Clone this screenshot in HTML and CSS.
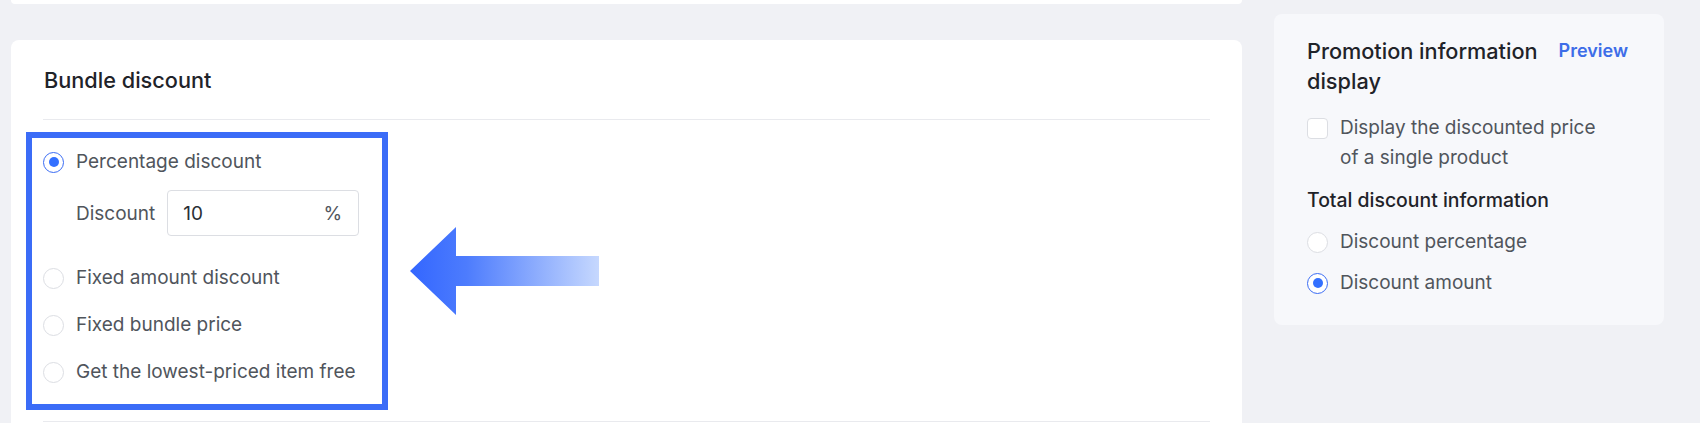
FILE: index.html
```html
<!DOCTYPE html>
<html>
<head>
<meta charset="utf-8">
<link rel="stylesheet" href="styles.css">
</head>
<body>
<div class="page">
  <div class="main">
    <div class="top-card"></div>
    <section class="card">
      <h2 class="card-title">Bundle discount</h2>
      <div class="card-body">
        <div class="highlight">
          <div class="radio-row"><span class="radio checked"></span><span class="radio-text">Percentage discount</span></div>
          <div class="field-row">
            <span class="field-label">Discount</span>
            <div class="input"><span class="input-value">10</span><span class="input-suffix">%</span></div>
          </div>
          <div class="radio-row gap-lg"><span class="radio"></span><span class="radio-text">Fixed amount discount</span></div>
          <div class="radio-row gap-sm"><span class="radio"></span><span class="radio-text">Fixed bundle price</span></div>
          <div class="radio-row gap-sm"><span class="radio"></span><span class="radio-text">Get the lowest-priced item free</span></div>
        </div>
        <svg class="arrow" width="189" height="88" viewBox="0 0 189 88">
          <defs>
            <linearGradient id="ag" x1="0" y1="0" x2="1" y2="0">
              <stop offset="0" stop-color="#3366ff"/>
              <stop offset="0.3" stop-color="#4d7cfd"/>
              <stop offset="1" stop-color="#c6d8fe"/>
            </linearGradient>
          </defs>
          <polygon points="0,44 46,0 46,29 189,29 189,59 46,59 46,88" fill="url(#ag)"/>
        </svg>
      </div>
      <div class="card-foot"></div>
    </section>
  </div>
  <aside class="side">
    <div class="panel">
      <div class="panel-head">
        <h3 class="panel-title">Promotion information display</h3>
        <span class="preview">Preview</span>
      </div>
      <label class="check-row">
        <span class="checkbox"></span>
        <span class="check-text">Display the discounted price of a single product</span>
      </label>
      <div class="sub-title">Total discount information</div>
      <div class="opt-row"><span class="radio"></span><span class="radio-text">Discount percentage</span></div>
      <div class="opt-row opt-second"><span class="radio checked"></span><span class="radio-text">Discount amount</span></div>
    </div>
  </aside>
</div>
</body>
</html>
```
FILE: styles.css
```css
html, body {
  margin: 0;
  padding: 0;
}
body {
  background: #f0f1f5;
  font-family: "Inter", "Liberation Sans", sans-serif;
  color: #50555c;
  width: 1700px;
  height: 423px;
  overflow: hidden;
}
.page {
  display: flex;
  align-items: flex-start;
  padding-left: 11px;
  gap: 32px;
}
.main {
  width: 1231px;
  flex: none;
}
.top-card {
  height: 4px;
  background: #fff;
  border-radius: 0 0 6px 6px;
  margin-bottom: 36px;
}
.card {
  background: #fff;
  border-radius: 8px 8px 0 0;
  padding: 0 32px;
  height: 400px;
}
.card-title {
  margin: 0;
  font-size: 21.7px;
  font-weight: 500;
  line-height: 30px;
  color: #1f2329;
  padding: 25px 0 24px 1px;
  border-bottom: 1px solid #e9eaee;
}
.card-body {
  display: flex;
  align-items: center;
  padding-top: 12px;
}
.highlight {
  box-sizing: border-box;
  width: 362px;
  margin-left: -17px;
  border: 6px solid #3b6cf7;
  padding: 8px 0 16px 11px;
}
.radio-row {
  display: flex;
  align-items: center;
  height: 32px;
  gap: 12px;
}
.gap-lg { margin-top: 26px; }
.gap-sm { margin-top: 15px; }
.radio {
  box-sizing: border-box;
  width: 21px;
  height: 21px;
  border-radius: 50%;
  border: 1px solid #dcdee3;
  background: #fff;
  flex: none;
  display: flex;
  align-items: center;
  justify-content: center;
}
.radio.checked {
  border: 1.5px solid #3a6cf4;
}
.radio.checked::after {
  content: "";
  width: 10px;
  height: 10px;
  border-radius: 50%;
  background: #3370ff;
}
.radio-text {
  font-size: 19px;
  line-height: 28px;
  color: #50555c;
}
.field-row {
  display: flex;
  align-items: center;
  margin-top: 12px;
  padding-left: 33px;
  gap: 12px;
}
.field-label {
  font-size: 19px;
  color: #50555c;
}
.input {
  box-sizing: border-box;
  width: 192px;
  height: 46px;
  border: 1px solid #dcdee3;
  border-radius: 4px;
  display: flex;
  align-items: center;
  justify-content: space-between;
  padding: 0 16px 0 15px;
  font-size: 19px;
  color: #2b2f36;
}
.input-suffix { color: #50555c; }
.arrow {
  flex: none;
  margin-left: 22px;
  display: block;
}
.card-foot {
  margin-top: 11px;
  border-top: 1px solid #e9eaee;
}
.side {
  width: 390px;
  flex: none;
  padding-top: 14px;
}
.panel {
  background: #f7f8fb;
  border-radius: 8px;
  padding: 22px 32px 27px 33px;
  height: 311px;
  box-sizing: border-box;
}
.panel-head {
  display: flex;
  align-items: flex-start;
  gap: 14px;
}
.panel-title {
  margin: 0;
  flex: 1;
  font-size: 21.7px;
  font-weight: 500;
  line-height: 30px;
  color: #1f2329;
}
.preview {
  flex: none;
  font-size: 18px;
  font-weight: 600;
  line-height: 30px;
  color: #3d6de8;
  margin-right: 4px;
}
.check-row {
  display: flex;
  align-items: flex-start;
  gap: 12px;
  margin-top: 17px;
}
.checkbox {
  box-sizing: border-box;
  width: 21px;
  height: 21px;
  border: 1px solid #dcdee3;
  border-radius: 4px;
  background: #fff;
  flex: none;
  margin-top: 5px;
}
.check-text {
  width: 268px;
  font-size: 19px;
  line-height: 30px;
  color: #50555c;
}
.sub-title {
  margin-top: 12px;
  font-size: 19.4px;
  font-weight: 500;
  line-height: 30px;
  color: #1f2329;
}
.opt-row {
  display: flex;
  align-items: center;
  gap: 12px;
  height: 30px;
  margin-top: 12px;
}
.opt-second { margin-top: 11px; }
```
